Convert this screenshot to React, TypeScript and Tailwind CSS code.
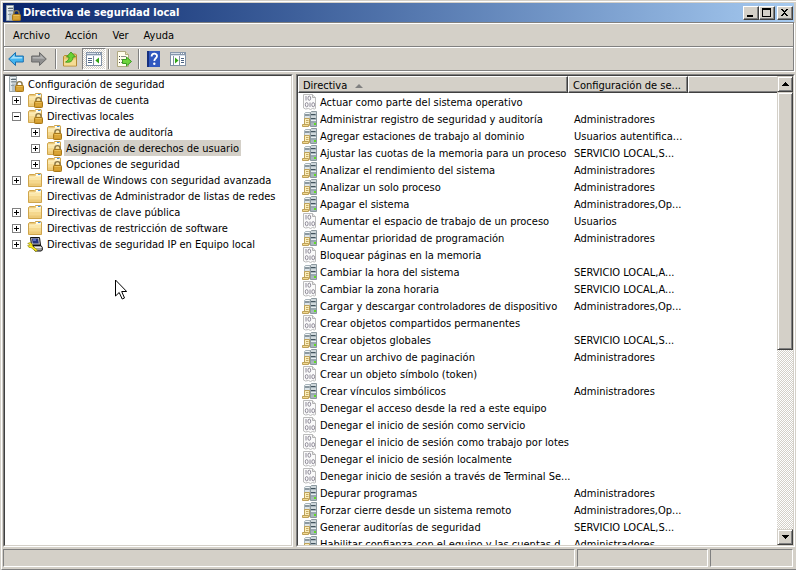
import type { ReactNode } from "react";

type IconProps = { className?: string };

function Svg({ children, className = "size-4" }: { children: ReactNode; className?: string }) {
  return (
    <svg viewBox="0 0 16 16" className={`shrink-0 ${className}`} aria-hidden="true">
      {children}
    </svg>
  );
}

function Padlock() {
  return (
    <g>
      <path d="M8.900 10V8.200a2.600 2.600 0 0 1 5.200 0V10" fill="none" stroke="#8a7646" strokeWidth="1.400" />
      <rect x="7.500" y="9.500" width="8" height="6" rx="0.800" fill="#d29a2a" stroke="#a87818" />
      <path d="M8.500 10.700h6" stroke="#f3cd6c" strokeWidth="0.900" />
      <path d="M8.500 13h6" stroke="#e3b348" strokeWidth="0.900" />
    </g>
  );
}

function ServerLockIcon({ className }: IconProps) {
  return (
    <Svg className={className}>
      <path d="M1.500.5h7v15h-7z" fill="#b4bfc5" stroke="#98a4aa" />
      <path d="M2 1h2v14H2z" fill="#dfe6e9" />
      <path d="M2 1h6v1H2z" fill="#f2f6f8" />
      <path d="M3 3.500h5M3 6h5" stroke="#5a6971" />
      <path d="M2 4.500h6M2 7h6" stroke="#eef3f5" strokeWidth="0.800" />
      <path d="M3 9.500h3" stroke="#8e9ca3" />
      <Padlock />
    </Svg>
  );
}

function FolderShape() {
  return (
    <g>
      <path d="M1.500 14.500v-11l1-1h5l1-1h5.500l.5.700v12.300z" fill="#ecc978" stroke="#cfa54c" />
      <path d="M9 2h5v2H9z" fill="#fff" />
      <path d="M11 2.500h2.500" stroke="#4f97dc" />
      <path d="M2 4.500h6l.7-.7H14V14H2z" fill="#fbe6a8" />
      <path d="M2 8h12v6H2z" fill="#f5d88e" />
      <path d="M2 11.500h12V14H2z" fill="#edca78" />
      <path d="M2 5h6l.7-.7H14" fill="none" stroke="#fff4cc" strokeWidth="0.800" />
    </g>
  );
}

function FolderIcon() {
  return (
    <Svg>
      <FolderShape />
    </Svg>
  );
}

function FolderLockIcon() {
  return (
    <Svg>
      <FolderShape />
      <Padlock />
    </Svg>
  );
}

function IpSecurityIcon() {
  return (
    <Svg>
      <path d="M3.500 1.500h9l1 7.500h-9z" fill="#c0c0c0" stroke="#111" />
      <path d="M5 2.500h6l.8 5H5.700z" fill="#26357e" />
      <path d="M6 4h3" stroke="#8fa8ff" />
      <path d="M6 9.500h8l1.300 2v2.500l-1 1H8z" fill="#a4a4a4" stroke="#111" />
      <path d="M8 11.500h6.500" stroke="#eee" />
      <path d="M.7 7.500L3.200 6.500l2 1.500v2l5.300 4-1.500 1.500-5-4H2L.7 9.500l1.800.3.700-1z" fill="#fff01a" stroke="#8a7d00" strokeWidth="0.600" />
    </Svg>
  );
}

function PolicyServerIcon() {
  return (
    <Svg>
      <path d="M2.500 2.500l1-1H8v12H2.500z" fill="#d5dde1" stroke="#a9b5bb" />
      <path d="M8.500 1.500l1-1h5v15h-6z" fill="#a9b6bd" stroke="#8b989f" />
      <path d="M3.500 2h4v1h-4zM9 1.500h5v1H9zM9 5.500h5v1H9z" fill="#f3f8fa" />
      <path d="M3 4h4.500M9 3.500h4.500M9 7.500h4.500" stroke="#43545e" strokeWidth="1.200" />
      <path d="M3 6h4.500M9 9.500h5" stroke="#e6edf0" />
      <path d="M9 11h5" stroke="#8999a2" />
      <rect x="12" y="12" width="2" height="2" fill="#5fdc28" />
      <path d="M2.500 7.500h5v7h-5z" fill="#fbeebb" stroke="#bea159" />
      <path d="M.5 13.500h6v2h-6z" fill="#f1d98f" stroke="#bea159" />
      <path d="M4 9.500h2.500M4 11.500h2.500" stroke="#bea159" strokeWidth="0.900" />
    </Svg>
  );
}

function BinaryPolicyIcon() {
  return (
    <Svg>
      <path d="M1.500.5h9l3 3v11l-1 .5-2-.5-2 1-2-1-3 .5-2-1z" fill="#fafafa" stroke="#bcbcbc" />
      <path d="M10.500.5v3h3" fill="#e2e2e2" stroke="#b4b4b4" />
      <g fill="none" stroke="#85808f" strokeWidth="0.900">
        <path d="M4 2v4.500M8 8.500V13" />
        <ellipse cx="7.300" cy="4.200" rx="1.400" ry="2.100" />
        <ellipse cx="4.700" cy="10.700" rx="1.400" ry="2.100" />
        <ellipse cx="11.200" cy="10.700" rx="1.400" ry="2.100" />
      </g>
    </Svg>
  );
}

function ArrowIcon({ direction }: { direction: "back" | "forward" }) {
  return direction === "back" ? (
    <Svg>
      <path d="M.7 8L7.500 1.500V5H15.300v6H7.500v3.500z" fill="#42b4f0" stroke="#1b6fae" strokeLinejoin="round" />
      <path d="M2.500 7.700L6.500 3.800V6h7.700v1.500z" fill="#a5e0fb" />
    </Svg>
  ) : (
    <Svg>
      <path d="M15.300 8L8.500 1.500V5H.7v6h7.800v3.500z" fill="#8f8f8f" stroke="#686868" strokeLinejoin="round" />
      <path d="M13.500 7.700L9.500 3.800V6H1.700v1.500z" fill="#b4b4b4" />
    </Svg>
  );
}

function FolderUpIcon() {
  return (
    <Svg>
      <path d="M.5 15v-9.500l1-1h5l1-1.500h5l1 1V15z" fill="#eac670" stroke="#b48a35" />
      <path d="M1 8.500h12v6H1z" fill="#f5dc94" />
      <path d="M2.500 11c2.500-1 3.500-3 3.500-5H3.500L8 1l4.500 5H10c0 4-2.500 6-7.500 5z" fill="#6ad234" stroke="#318f17" strokeWidth="0.800" />
    </Svg>
  );
}

function PaneIcon({ side }: { side: "left" | "right" }) {
  return (
    <Svg>
      <rect x="0.500" y="1.500" width="15" height="13" fill="#fff" stroke="#8090a4" />
      <path d="M0 1h16v4H0z" fill="#8797ab" />
      <path d="M1 2.500h9M1 4.500h14" stroke="#dfe6ee" strokeWidth="0.900" />
      <path d="M11 2.500h1M13 2.500h1" stroke="#fff" />
      {side === "left" ? (
        <g>
          <path d="M2 7.500h4M2 9.500h4M2 11.500h4" stroke="#4e6584" />
          <path d="M7.500 5v9" stroke="#8090a4" />
          <path d="M13 6.500v6L9.300 9.500z" fill="#2fa512" />
        </g>
      ) : (
        <g>
          <path d="M11 7.500h3M11 9.500h3M11 11.500h3" stroke="#4e6584" />
          <path d="M9.500 5v9M3.500 5v9" stroke="#8090a4" />
          <path d="M5 6.500v6l3.500-3z" fill="#2fa512" />
        </g>
      )}
    </Svg>
  );
}

function ExportIcon() {
  return (
    <Svg>
      <path d="M1.500.5h8l3 3v12h-11z" fill="#fffdec" stroke="#b0a981" />
      <path d="M9.500.5v3h3" fill="#e8e2bd" stroke="#b0a981" />
      <path d="M3 5.500h1M3 8.500h1M3 11.500h1" stroke="#4f4f4f" />
      <path d="M5 5.500h5M5 8.500h3M5 11.500h3" stroke="#8b8b8b" />
      <path d="M6.500 8.500h4V6l5 4.500-5 4.500v-2.500h-4z" fill="#6fd43c" stroke="#2f9416" strokeWidth="0.900" />
    </Svg>
  );
}

function HelpIcon() {
  return (
    <Svg>
      <rect x="1" y="0" width="13" height="16" fill="#3158bf" />
      <path d="M1 0h2v16H1z" fill="#16307e" />
      <path d="M5.600 5.500c0-3.700 5.400-3.700 5.400-.5 0 2.300-2.700 2.200-2.700 5" fill="none" stroke="#fff" strokeWidth="1.800" />
      <circle cx="8.300" cy="12.700" r="1.200" fill="#fff" />
    </Svg>
  );
}

const raised =
  "border border-t-white border-l-white border-r-[#404040] border-b-[#404040] bg-[#d4d0c8] shadow-[inset_-1px_-1px_0_#808080]";

function CaptionButton({ label, children, className = "" }: { label: string; children: ReactNode; className?: string }) {
  return (
    <button type="button" aria-label={label} className={`flex h-3.5 w-4 items-center justify-center ${raised} ${className}`}>
      <svg viewBox="0 0 10 10" className="size-2.5" aria-hidden="true" shapeRendering="crispEdges">
        {children}
      </svg>
    </button>
  );
}

function TitleBar() {
  return (
    <header className="mr-px flex h-[19px] shrink-0 items-center bg-linear-to-r from-[#0a246a] to-[#a6caf0] pr-px pl-0.5">
      <ServerLockIcon />
      <h1 className="ml-0.5 flex-1 truncate text-[11px] leading-4 font-bold text-white">Directiva de seguridad local</h1>
      <CaptionButton label="Minimizar">
        <path d="M1 7h6v2H1z" />
      </CaptionButton>
      <CaptionButton label="Maximizar">
        <path d="M0 0h9v9H0zM1 2v6h7V2z" fillRule="evenodd" />
      </CaptionButton>
      <CaptionButton label="Cerrar" className="ml-0.5">
        <path d="M1 1h2v1h1v1h1V2h1V1h2v1H7v1H6v1H5v1h1v1h1v1h1v1H6V7H5V6H4v1H3v1H1V7h1V6h1V5h1V4H3V3H2V2H1z" />
      </CaptionButton>
    </header>
  );
}

function ToolButton({ label, children, className = "w-4" }: { label: string; children: ReactNode; className?: string }) {
  return (
    <button type="button" aria-label={label} className={`flex h-[22px] items-center justify-center ${className}`}>
      {children}
    </button>
  );
}

function Separator() {
  return <div className="h-5 w-0.5 border-r border-l border-r-white border-l-[#808080]" />;
}

function Bars() {
  return (
    <div className="mr-px shrink-0 border border-[#808080] shadow-[1px_1px_0_#fff,inset_1px_1px_0_#fff]">
      <nav aria-label="Menú" className="flex h-6 items-center gap-[15px] border-b border-[#808080] pt-0.5 pl-[9px]">
        {["Archivo", "Acción", "Ver", "Ayuda"].map((name) => (
          <button key={name} type="button">
            {name}
          </button>
        ))}
      </nav>
      <div role="toolbar" aria-label="Estándar" className="flex h-[23px] items-center border-t border-white pl-1">
        <ToolButton label="Atrás">
          <ArrowIcon direction="back" />
        </ToolButton>
        <ToolButton label="Adelante" className="ml-[7px] w-4">
          <ArrowIcon direction="forward" />
        </ToolButton>
        <div className="mr-1.5 ml-2">
          <Separator />
        </div>
        <ToolButton label="Subir un nivel">
          <FolderUpIcon />
        </ToolButton>
        <ToolButton
          label="Mostrar u ocultar el árbol de consola"
          className="ml-[3px] w-6 border border-t-[#808080] border-r-white border-b-white border-l-[#808080] bg-[conic-gradient(#fff_25%,#d4d0c8_0_50%,#fff_0_75%,#d4d0c8_0)] bg-[length:2px_2px]"
        >
          <PaneIcon side="left" />
        </ToolButton>
        <div className="mr-1.5 ml-0.5">
          <Separator />
        </div>
        <ToolButton label="Exportar lista">
          <ExportIcon />
        </ToolButton>
        <div className="mx-1.5">
          <Separator />
        </div>
        <ToolButton label="Ayuda">
          <HelpIcon />
        </ToolButton>
        <ToolButton label="Mostrar u ocultar el panel de acciones" className="ml-2 w-4">
          <PaneIcon side="right" />
        </ToolButton>
      </div>
    </div>
  );
}

type Node = { name: string; icon: ReactNode; open?: boolean; leaf?: boolean; selected?: boolean; children?: Node[] };

const tree: Node[] = [
  { name: "Directivas de cuenta", icon: <FolderLockIcon /> },
  {
    name: "Directivas locales",
    icon: <FolderLockIcon />,
    open: true,
    children: [
      { name: "Directiva de auditoría", icon: <FolderLockIcon /> },
      { name: "Asignación de derechos de usuario", icon: <FolderLockIcon />, selected: true },
      { name: "Opciones de seguridad", icon: <FolderLockIcon /> },
    ],
  },
  { name: "Firewall de Windows con seguridad avanzada", icon: <FolderIcon /> },
  { name: "Directivas de Administrador de listas de redes", icon: <FolderIcon />, leaf: true },
  { name: "Directivas de clave pública", icon: <FolderIcon /> },
  { name: "Directivas de restricción de software", icon: <FolderIcon /> },
  { name: "Directivas de seguridad IP en Equipo local", icon: <IpSecurityIcon /> },
];

function TreeItem({ node }: { node: Node }) {
  return (
    <li role="treeitem" aria-selected={!!node.selected} aria-expanded={node.leaf ? undefined : !!node.open}>
      <div className="flex h-4 items-center">
        {node.leaf ? (
          <span className="w-[9px] shrink-0" />
        ) : (
          <button
            type="button"
            aria-label={node.open ? "Contraer" : "Expandir"}
            className="size-[9px] shrink-0 border border-[#808080] bg-white"
          >
            <svg viewBox="0 0 7 7" className="size-[7px]" shapeRendering="crispEdges" aria-hidden="true">
              <path d={node.open ? "M1 3h5v1H1z" : "M1 3h2V1h1v2h2v1H4v2H3V4H1z"} />
            </svg>
          </button>
        )}
        <span className="mr-0.5 ml-1.5">{node.icon}</span>
        <span className={`h-4 px-0.5 pt-0.5 leading-[14px] whitespace-nowrap ${node.selected ? "bg-[#d4d0c8]" : ""}`}>
          {node.name}
        </span>
      </div>
      {node.children && (
        <ul role="group" className="pl-[19px]">
          {node.children.map((child) => (
            <TreeItem key={child.name} node={child} />
          ))}
        </ul>
      )}
    </li>
  );
}

const sunken = "border border-t-[#808080] border-l-[#808080] border-r-white border-b-white";
const sunkenInner =
  "border border-t-[#404040] border-l-[#404040] border-r-[#d4d0c8] border-b-[#d4d0c8] bg-white";

function TreePane() {
  return (
    <aside className={`w-[290px] shrink-0 ${sunken}`}>
      <div className={`h-full overflow-hidden ${sunkenInner}`}>
        <div className="flex h-4 items-center pl-[3px]">
          <ServerLockIcon />
          <span className="h-4 px-1 pt-0.5 leading-[14px] whitespace-nowrap">Configuración de seguridad</span>
        </div>
        <ul role="tree" aria-label="Configuración de seguridad" className="pl-[7px]">
          {tree.map((node) => (
            <TreeItem key={node.name} node={node} />
          ))}
        </ul>
      </div>
    </aside>
  );
}

const policies: [string, string][] = [
  ["Actuar como parte del sistema operativo", ""],
  ["Administrar registro de seguridad y auditoría", "Administradores"],
  ["Agregar estaciones de trabajo al dominio", "Usuarios autentifica..."],
  ["Ajustar las cuotas de la memoria para un proceso", "SERVICIO LOCAL,S..."],
  ["Analizar el rendimiento del sistema", "Administradores"],
  ["Analizar un solo proceso", "Administradores"],
  ["Apagar el sistema", "Administradores,Op..."],
  ["Aumentar el espacio de trabajo de un proceso", "Usuarios"],
  ["Aumentar prioridad de programación", "Administradores"],
  ["Bloquear páginas en la memoria", ""],
  ["Cambiar la hora del sistema", "SERVICIO LOCAL,A..."],
  ["Cambiar la zona horaria", "SERVICIO LOCAL,A..."],
  ["Cargar y descargar controladores de dispositivo", "Administradores,Op..."],
  ["Crear objetos compartidos permanentes", ""],
  ["Crear objetos globales", "SERVICIO LOCAL,S..."],
  ["Crear un archivo de paginación", "Administradores"],
  ["Crear un objeto símbolo (token)", ""],
  ["Crear vínculos simbólicos", "Administradores"],
  ["Denegar el acceso desde la red a este equipo", ""],
  ["Denegar el inicio de sesión como servicio", ""],
  ["Denegar el inicio de sesión como trabajo por lotes", ""],
  ["Denegar el inicio de sesión localmente", ""],
  ["Denegar inicio de sesión a través de Terminal Se...", ""],
  ["Depurar programas", "Administradores"],
  ["Forzar cierre desde un sistema remoto", "Administradores,Op..."],
  ["Generar auditorías de seguridad", "SERVICIO LOCAL,S..."],
  ["Habilitar confianza con el equipo y las cuentas d...", "Administradores"],
];

const binaryRows = new Set([0, 7, 9, 11, 13, 16, 18, 19, 20, 21, 22]);

const headerLast = "border-t border-b border-l border-t-white border-b-[#404040] border-l-white bg-[#d4d0c8] shadow-[inset_0_-1px_0_#808080]";

function HeaderCell({ children, className = "", last = false }: { children?: ReactNode; className?: string; last?: boolean }) {
  return (
    <th scope="col" className={`h-[17px] p-0 text-left font-normal ${className}`}>
      <div className={`flex h-[17px] items-center pt-0.5 pl-1 whitespace-nowrap ${last ? headerLast : raised}`}>{children}</div>
    </th>
  );
}

function PolicyTable() {
  return (
    <table className="w-full table-fixed border-collapse">
      <thead>
        <tr>
          <HeaderCell className="w-[270px]">
            Directiva
            <svg viewBox="0 0 8 4" className="ml-2 h-1 w-2" aria-hidden="true">
              <path d="M4 0l4 4H0z" fill="#808080" />
            </svg>
          </HeaderCell>
          <HeaderCell className="w-[120px]">Configuración de se...</HeaderCell>
          <HeaderCell last />
        </tr>
      </thead>
      <tbody className="leading-[14px]">
        {policies.map(([name, value], index) => (
          <tr key={name}>
            <td className="p-0">
              <div className="flex h-[17px] items-end gap-0.5 pl-1 whitespace-nowrap">
                {binaryRows.has(index) ? <BinaryPolicyIcon /> : <PolicyServerIcon />}
                {name}
              </div>
            </td>
            <td className="p-0">
              <div className="flex h-[17px] items-end pl-1.5 whitespace-nowrap">{value}</div>
            </td>
            <td className="p-0" />
          </tr>
        ))}
      </tbody>
    </table>
  );
}

const scrollPart =
  "border border-t-[#d4d0c8] border-l-[#d4d0c8] border-r-[#404040] border-b-[#404040] bg-[#d4d0c8] shadow-[inset_1px_1px_0_#fff,inset_-1px_-1px_0_#808080]";

function ScrollButton({ label, path }: { label: string; path: string }) {
  return (
    <button type="button" aria-label={label} className={`flex h-4 w-full shrink-0 items-center justify-center ${scrollPart}`}>
      <svg viewBox="0 0 7 4" className="h-1 w-[7px]" shapeRendering="crispEdges" aria-hidden="true">
        <path d={path} />
      </svg>
    </button>
  );
}

function ListPane() {
  return (
    <main className={`min-w-0 flex-1 ${sunken}`}>
      <div className={`flex h-full overflow-hidden ${sunkenInner}`}>
        <div className="min-w-0 flex-1 overflow-hidden">
          <PolicyTable />
        </div>
        <div className="flex w-4 shrink-0 flex-col">
          <ScrollButton label="Desplazar hacia arriba" path="M3 0h1v1h1v1h1v1h1v1H0V3h1V2h1V1h1z" />
          <div className="min-h-0 flex-1 bg-[conic-gradient(#fff_25%,#d4d0c8_0_50%,#fff_0_75%,#d4d0c8_0)] bg-[length:2px_2px]">
            <div className={`h-[59%] ${scrollPart}`} />
          </div>
          <ScrollButton label="Desplazar hacia abajo" path="M0 0h7v1H6v1H5v1H4v1H3V3H2V2H1V1H0z" />
        </div>
      </div>
    </main>
  );
}

function StatusBar() {
  const pane = "border border-t-[#808080] border-l-[#808080] border-r-white border-b-white";
  return (
    <footer className="mt-0.5 mr-0.5 mb-0.5 flex h-[18px] shrink-0 gap-0.5">
      <div className={`flex-1 ${pane}`} />
      <div className={`w-[131px] ${pane}`} />
      <div className={`w-[83px] ${pane}`} />
    </footer>
  );
}

function Pointer() {
  return (
    <svg
      viewBox="0 0 12 21"
      className="pointer-events-none absolute top-[279px] left-[115px] h-[21px] w-3"
      aria-hidden="true"
    >
      <path d="M.5 1v16l3.700-3.500 3 6.500 2.300-1-2.800-6.500h5z" fill="#fff" stroke="#000" />
    </svg>
  );
}

export default function App() {
  return (
    <div className="relative h-screen overflow-hidden bg-[#d4d0c8] pt-px pl-px font-['DejaVu_Sans_Condensed','DejaVu_Sans',sans-serif] text-[11px] leading-4 text-black">
      <div className="flex h-full flex-col border-t border-b border-l border-t-white border-b-[#808080] border-l-white pt-px pr-px pl-px">
        <TitleBar />
        <Bars />
        <div className="mt-[3px] flex min-h-0 flex-1 gap-[3px]">
          <TreePane />
          <ListPane />
        </div>
        <StatusBar />
      </div>
      <Pointer />
    </div>
  );
}
